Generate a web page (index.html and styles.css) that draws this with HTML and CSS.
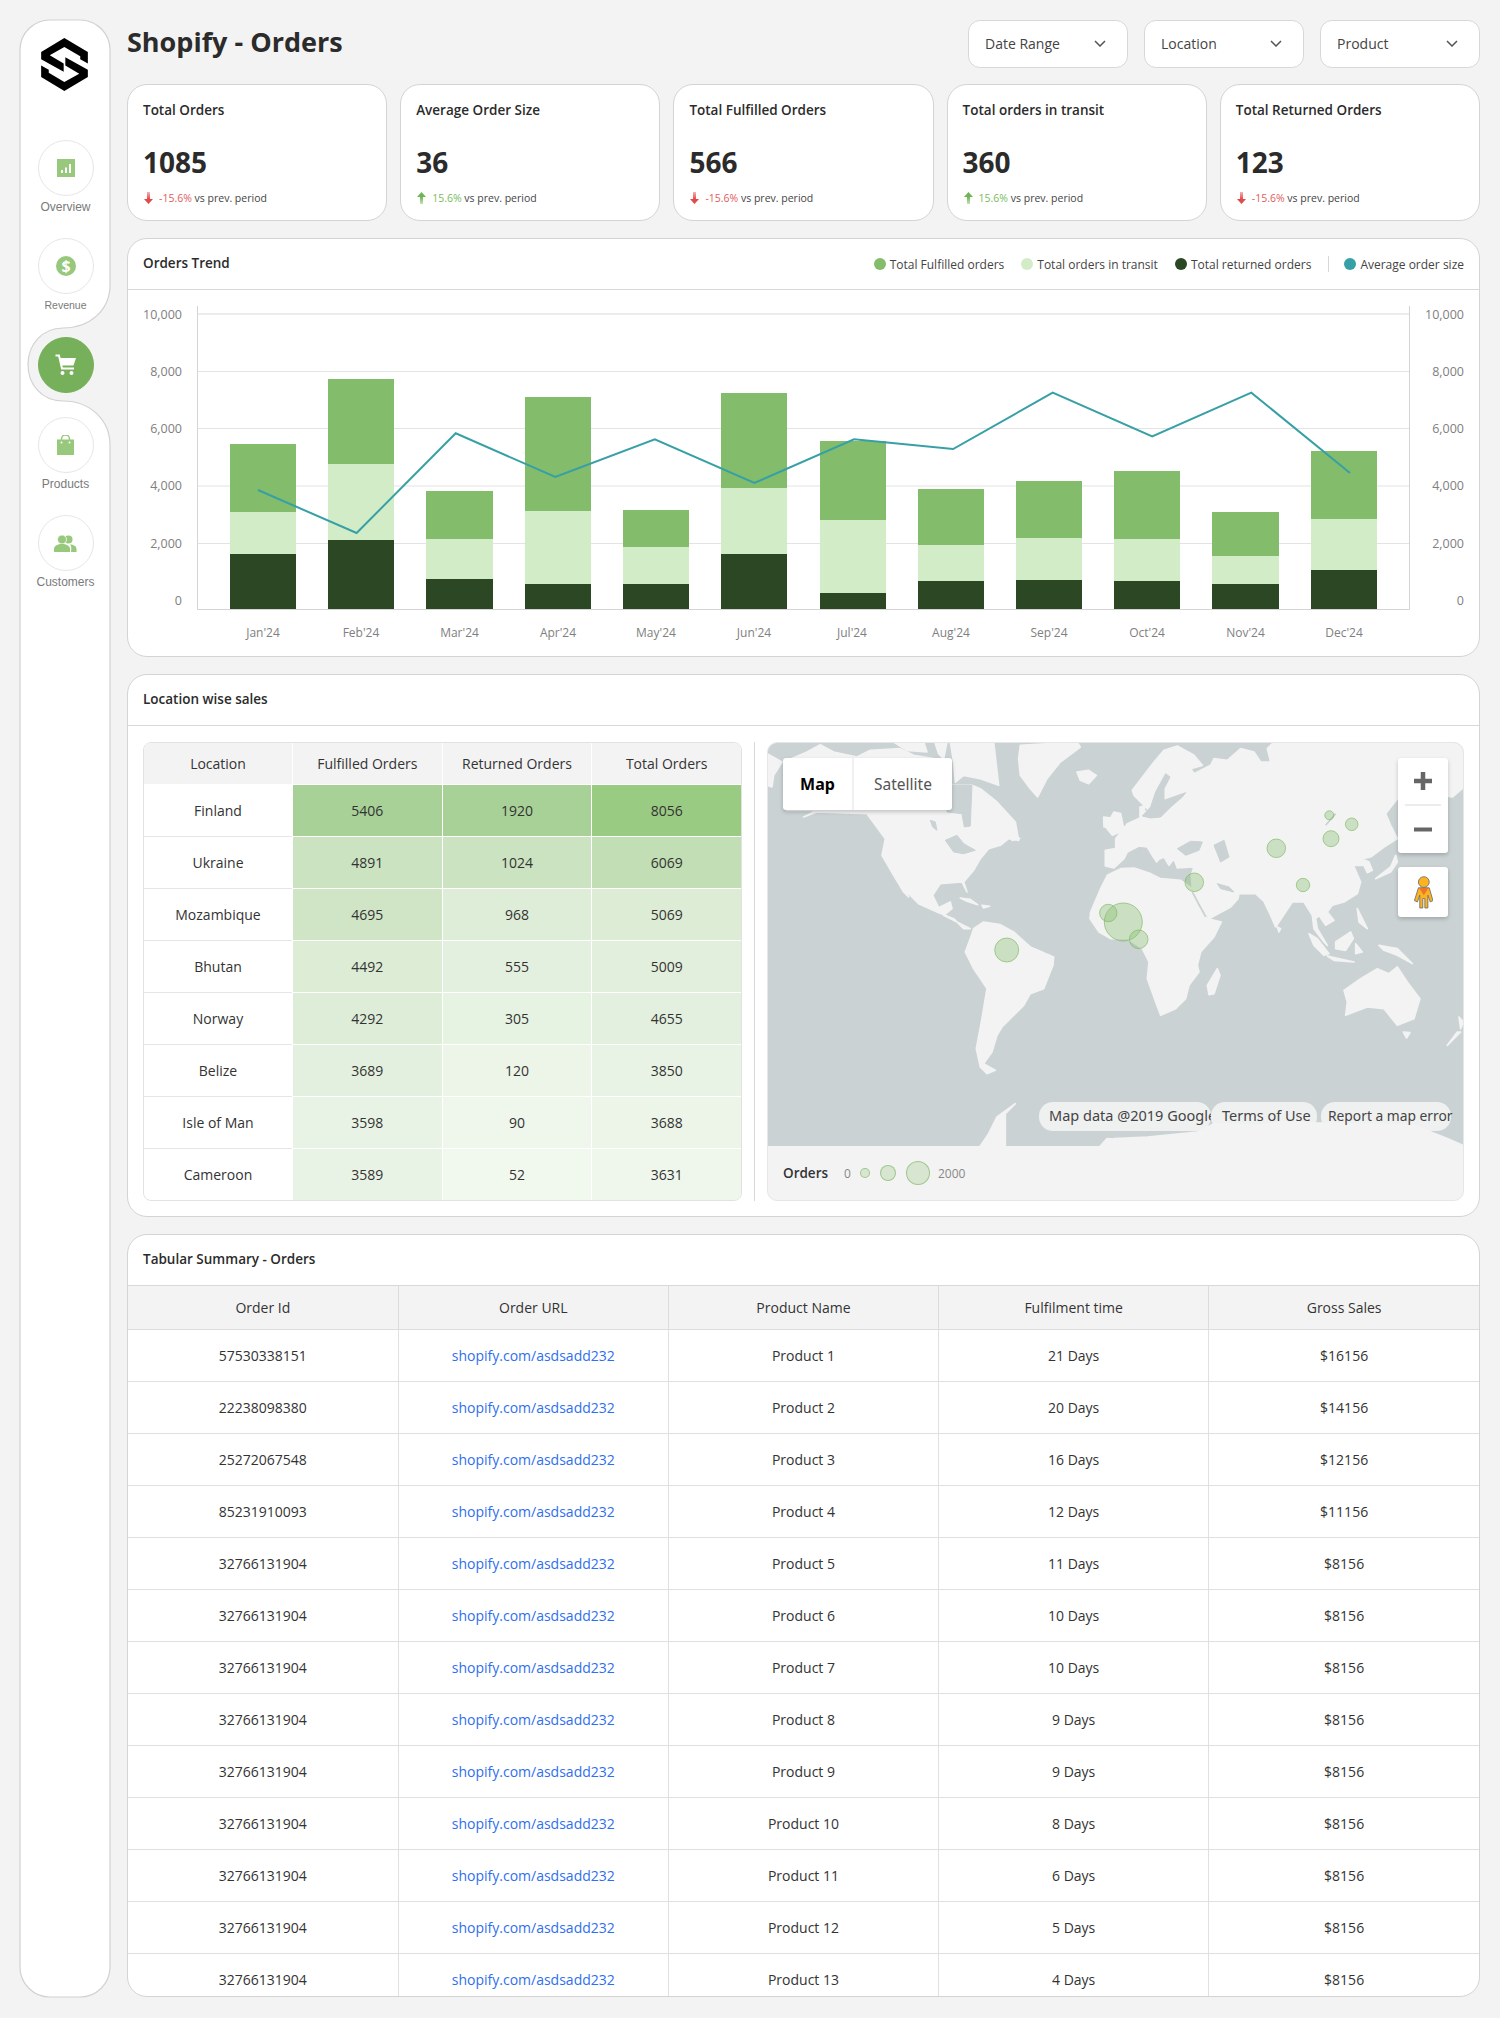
FILE: index.html
```html
<!DOCTYPE html>
<html lang="en">
<head>
    <meta charset="UTF-8" />
    <meta name="viewport" content="width=device-width, initial-scale=1">
    <title>Shopify - Orders</title>
    <link rel="stylesheet" href="styles.css">
</head>
<body>
    <svg class="gradients" width="0" height="0">
        <defs>
            <linearGradient id="fadeRed" x1="0" y1="1" x2="0" y2="0">
                <stop offset="0.4" stop-color="#e4484b"/><stop offset="1" stop-color="#f3b5b5"/>
            </linearGradient>
            <linearGradient id="fadeGreen" x1="0" y1="0" x2="0" y2="1">
                <stop offset="0.4" stop-color="#6fb455"/><stop offset="1" stop-color="#c5e2b8"/>
            </linearGradient>
        </defs>
    </svg>

    <aside class="sidebar">
        <svg class="sidebar-shape" width="92" height="1979" viewBox="19 19 92 1979">
            <path d="M50 20H80A30 30 0 0 1 110 50V285C110 310 90 328 63 328C42 328 28 345 28 364.500C28 385 42 401 63 401C90 401 110 420 110 445V1967A30 30 0 0 1 80 1997H50A30 30 0 0 1 20 1967V50A30 30 0 0 1 50 20Z"/>
        </svg>
        <svg class="logo" width="47" height="53" viewBox="122 113 141 160">
            <path d="M192 113L263 155V190L240 177V168L192 140L148 165L190 190V215L122 177V155Z"/>
            <path d="M192 273L122 231V196L145 209V218L192 246L237 221L195 196V171L263 209V231Z"/>
        </svg>
        <nav class="nav">
            <a class="nav-item">
                <span class="nav-icon">
                    <svg width="18" height="18" viewBox="0 0 18 18"><rect width="18" height="18" fill="#98c87b"/><rect x="4" y="11" width="2" height="3" fill="#fff"/><rect x="8" y="8.500" width="2" height="5.500" fill="#fff"/><rect x="12" y="5" width="2" height="9" fill="#fff"/></svg>
                </span>
                <span class="nav-label">Overview</span>
            </a>
            <a class="nav-item">
                <span class="nav-icon">
                    <svg width="20" height="20" viewBox="0 0 20 20"><circle cx="10" cy="10" r="10" fill="#98c87b"/><text x="10" y="15.500" text-anchor="middle" class="dollar">$</text></svg>
                </span>
                <span class="nav-label nav-label-small">Revenue</span>
            </a>
            <a class="nav-item nav-item-active">
                <span class="nav-icon">
                    <svg width="24" height="24" viewBox="0 0 24 24"><path d="M1.500 2.500H5L8 15.500H20" fill="none" stroke="#fff" stroke-width="2"/><path d="M6 5H22L19.500 12.500H7.500Z" fill="#fff"/><circle cx="8.500" cy="20" r="2" fill="#fff"/><circle cx="17.500" cy="20" r="2" fill="#fff"/></svg>
                </span>
            </a>
            <a class="nav-item">
                <span class="nav-icon">
                    <svg width="17" height="20" viewBox="0 0 17 20"><path d="M4.500 6V4a4 4 0 0 1 8 0V6" fill="none" stroke="#98c87b" stroke-width="1.500"/><rect y="4.500" width="17" height="15.500" fill="#98c87b"/><circle cx="4.500" cy="7.500" r="1" fill="#fff"/><circle cx="12.500" cy="7.500" r="1" fill="#fff"/></svg>
                </span>
                <span class="nav-label">Products</span>
            </a>
            <a class="nav-item">
                <span class="nav-icon">
                    <svg width="23" height="17" viewBox="0 0 23 17"><circle cx="14.500" cy="4.500" r="4" fill="#98c87b"/><path d="M17 17H22.500V14C22.500 11 19.500 9.500 16 9.500C17.500 11 17.500 13 17 17Z" fill="#98c87b"/><circle cx="8" cy="4.500" r="4.500" fill="#98c87b" stroke="#fff" stroke-width="0.800"/><path d="M0 17V14C0 10.500 4 9 8 9C12 9 16 10.500 16 14V17Z" fill="#98c87b"/></svg>
                </span>
                <span class="nav-label">Customers</span>
            </a>
        </nav>
    </aside>

    <main class="main">
        <header class="topbar">
            <h1>Shopify - Orders</h1>
            <div class="filters">
                <div class="filter">Date Range<svg width="12" height="7" viewBox="0 0 12 7"><path d="M1 1L6 6L11 1" fill="none" stroke="#555" stroke-width="1.500"/></svg></div>
                <div class="filter">Location<svg width="12" height="7" viewBox="0 0 12 7"><path d="M1 1L6 6L11 1" fill="none" stroke="#555" stroke-width="1.500"/></svg></div>
                <div class="filter">Product<svg width="12" height="7" viewBox="0 0 12 7"><path d="M1 1L6 6L11 1" fill="none" stroke="#555" stroke-width="1.500"/></svg></div>
            </div>
        </header>

        <section class="kpis">
            <div class="kpi">
                <h3>Total Orders</h3>
                <div class="kpi-value">1085</div>
                <div class="kpi-delta"><svg width="9" height="12" viewBox="0 0 9 12"><path d="M3 0H6V7H9L4.500 12L0 7H3Z" fill="url(#fadeRed)"/></svg><span class="down">-15.6%</span> vs prev. period</div>
            </div>
            <div class="kpi">
                <h3>Average Order Size</h3>
                <div class="kpi-value">36</div>
                <div class="kpi-delta"><svg width="9" height="12" viewBox="0 0 9 12"><path d="M3 12H6V5H9L4.500 0L0 5H3Z" fill="url(#fadeGreen)"/></svg><span class="up">15.6%</span> vs prev. period</div>
            </div>
            <div class="kpi">
                <h3>Total Fulfilled Orders</h3>
                <div class="kpi-value">566</div>
                <div class="kpi-delta"><svg width="9" height="12" viewBox="0 0 9 12"><path d="M3 0H6V7H9L4.500 12L0 7H3Z" fill="url(#fadeRed)"/></svg><span class="down">-15.6%</span> vs prev. period</div>
            </div>
            <div class="kpi">
                <h3>Total orders in transit</h3>
                <div class="kpi-value">360</div>
                <div class="kpi-delta"><svg width="9" height="12" viewBox="0 0 9 12"><path d="M3 12H6V5H9L4.500 0L0 5H3Z" fill="url(#fadeGreen)"/></svg><span class="up">15.6%</span> vs prev. period</div>
            </div>
            <div class="kpi">
                <h3>Total Returned Orders</h3>
                <div class="kpi-value">123</div>
                <div class="kpi-delta"><svg width="9" height="12" viewBox="0 0 9 12"><path d="M3 0H6V7H9L4.500 12L0 7H3Z" fill="url(#fadeRed)"/></svg><span class="down">-15.6%</span> vs prev. period</div>
            </div>
        </section>

        <section class="panel panel-trend">
            <div class="panel-head">
                <h2>Orders Trend</h2>
                <div class="legend">
                    <span class="legend-item"><i class="dot dot-fulfilled"></i>Total Fulfilled orders</span>
                    <span class="legend-item"><i class="dot dot-transit"></i>Total orders in transit</span>
                    <span class="legend-item"><i class="dot dot-returned"></i>Total returned orders</span>
                    <span class="legend-sep"></span>
                    <span class="legend-item"><i class="dot dot-average"></i>Average order size</span>
                </div>
            </div>
            <svg class="chart" width="1351" height="367" viewBox="128 290 1351 367">
                <g class="grid">
                    <line class="grid-top" x1="197" x2="1409" y1="314" y2="314"/>
                    <line x1="197" x2="1409" y1="371.500" y2="371.500"/>
                    <line x1="197" x2="1409" y1="428.500" y2="428.500"/>
                    <line x1="197" x2="1409" y1="486" y2="486"/>
                    <line x1="197" x2="1409" y1="543.500" y2="543.500"/>
                </g>
                <g class="axis">
                    <path d="M197.500 306V609.500H1409.500V306"/>
                </g>
                <g class="bar-fulfilled">
                    <rect x="230" y="444" width="66" height="68"/>
                    <rect x="328" y="379" width="66" height="85"/>
                    <rect x="426" y="491" width="67" height="48"/>
                    <rect x="525" y="397" width="66" height="114"/>
                    <rect x="623" y="510" width="66" height="37"/>
                    <rect x="721" y="393" width="66" height="95"/>
                    <rect x="820" y="441" width="66" height="79"/>
                    <rect x="918" y="489" width="66" height="56"/>
                    <rect x="1016" y="481" width="66" height="57"/>
                    <rect x="1114" y="471" width="66" height="68"/>
                    <rect x="1212" y="512" width="67" height="44"/>
                    <rect x="1311" y="451" width="66" height="68"/>
                </g>
                <g class="bar-transit">
                    <rect x="230" y="512" width="66" height="42"/>
                    <rect x="328" y="464" width="66" height="76"/>
                    <rect x="426" y="539" width="67" height="40"/>
                    <rect x="525" y="511" width="66" height="73"/>
                    <rect x="623" y="547" width="66" height="37"/>
                    <rect x="721" y="488" width="66" height="66"/>
                    <rect x="820" y="520" width="66" height="73"/>
                    <rect x="918" y="545" width="66" height="36"/>
                    <rect x="1016" y="538" width="66" height="42"/>
                    <rect x="1114" y="539" width="66" height="42"/>
                    <rect x="1212" y="556" width="67" height="28"/>
                    <rect x="1311" y="519" width="66" height="51"/>
                </g>
                <g class="bar-returned">
                    <rect x="230" y="554" width="66" height="55"/>
                    <rect x="328" y="540" width="66" height="69"/>
                    <rect x="426" y="579" width="67" height="30"/>
                    <rect x="525" y="584" width="66" height="25"/>
                    <rect x="623" y="584" width="66" height="25"/>
                    <rect x="721" y="554" width="66" height="55"/>
                    <rect x="820" y="593" width="66" height="16"/>
                    <rect x="918" y="581" width="66" height="28"/>
                    <rect x="1016" y="580" width="66" height="29"/>
                    <rect x="1114" y="581" width="66" height="28"/>
                    <rect x="1212" y="584" width="67" height="25"/>
                    <rect x="1311" y="570" width="66" height="39"/>
                </g>
                <polyline class="trend-line" points="258,490 356.600,533 455.700,433.300 555.300,477 654.800,439.300 754.400,483 854,439.300 953.100,449 1052.700,392.700 1152.200,436.300 1251.300,392.700 1350,473"/>
                <g class="tick-left">
                    <text x="182" y="318.500">10,000</text>
                    <text x="182" y="375.500">8,000</text>
                    <text x="182" y="432.500">6,000</text>
                    <text x="182" y="490">4,000</text>
                    <text x="182" y="547.500">2,000</text>
                    <text x="182" y="605">0</text>
                </g>
                <g class="tick-right">
                    <text x="1464" y="318.500">10,000</text>
                    <text x="1464" y="375.500">8,000</text>
                    <text x="1464" y="432.500">6,000</text>
                    <text x="1464" y="490">4,000</text>
                    <text x="1464" y="547.500">2,000</text>
                    <text x="1464" y="605">0</text>
                </g>
                <g class="tick-month">
                    <text x="263" y="637">Jan'24</text>
                    <text x="361" y="637">Feb'24</text>
                    <text x="459.500" y="637">Mar'24</text>
                    <text x="558" y="637">Apr'24</text>
                    <text x="656" y="637">May'24</text>
                    <text x="754" y="637">Jun'24</text>
                    <text x="852" y="637">Jul'24</text>
                    <text x="951" y="637">Aug'24</text>
                    <text x="1049" y="637">Sep'24</text>
                    <text x="1147" y="637">Oct'24</text>
                    <text x="1245.500" y="637">Nov'24</text>
                    <text x="1344" y="637">Dec'24</text>
                </g>
            </svg>
        </section>

        <section class="panel panel-location">
            <div class="panel-head"><h2>Location wise sales</h2></div>
            <div class="location-body">
                <table class="heat-table">
                    <thead>
                        <tr><th>Location</th><th>Fulfilled Orders</th><th>Returned Orders</th><th>Total Orders</th></tr>
                    </thead>
                    <tbody>
                        <tr><td>Finland</td><td class="h1">5406</td><td class="h1">1920</td><td class="h0">8056</td></tr>
                        <tr><td>Ukraine</td><td class="h2">4891</td><td class="h2">1024</td><td class="h3">6069</td></tr>
                        <tr><td>Mozambique</td><td class="h4">4695</td><td class="h6">968</td><td class="h5">5069</td></tr>
                        <tr><td>Bhutan</td><td class="h5">4492</td><td class="h8">555</td><td class="h7">5009</td></tr>
                        <tr><td>Norway</td><td class="h6">4292</td><td class="h9">305</td><td class="h8">4655</td></tr>
                        <tr><td>Belize</td><td class="h8">3689</td><td class="h11">120</td><td class="h10">3850</td></tr>
                        <tr><td>Isle of Man</td><td class="h10">3598</td><td class="h12">90</td><td class="h11">3688</td></tr>
                        <tr><td>Cameroon</td><td class="h10">3589</td><td class="h13">52</td><td class="h12">3631</td></tr>
                    </tbody>
                </table>
                <div class="location-sep"></div>
                <div class="map-box">
                    <div class="map">
                        <svg class="map-art" width="697" height="404" viewBox="1 1 697 404">
                            <!-- americas, traced at 3x -->
                            <g class="land" transform="scale(0.3333)">
                                <path d="M120 30L160 8L200 30L270 45L310 25L400 20L440 40L500 50L545 130L615 130L640 140L690 180L745 240L755 295L725 290L700 310L665 320L640 350L620 385L590 420L600 450L585 420L520 425L497 460L515 497L550 480L555 500L530 520L580 545L610 560L590 560L560 530L510 510L455 485L420 450L395 410L425 465L410 450L380 400L345 340L355 290L300 215L150 210L110 225L150 205L60 205L50 60Z"/>
                                <path d="M380 0L470 0L480 30L420 25ZM505 5L540 0L530 50L515 35ZM550 0L680 0L695 130L640 110L590 100L565 120L560 60Z"/>
                                <path d="M760 10L930 0L940 15L880 60L840 110L812 165L790 140L760 100L755 50Z"/>
                                <path d="M930 90L965 85L988 100L965 125L940 115Z"/>
                                <path d="M0 35L45 60L20 100L15 135L0 130Z"/>
                                <path d="M580 468L610 472L632 488L600 478ZM645 490L668 493L650 498ZM730 265L758 290L735 295Z"/>
                                <path d="M620 560L650 540L700 548L740 570L790 615L860 645L858 670L830 740L790 755L770 790L735 825L705 855L690 880L675 930L650 965L685 985L660 995L640 975L628 920L645 830L660 740L620 680L595 630L610 590Z"/>
                                <path d="M640 1212L665 1175L690 1125L745 1085L715 1115L715 1212Z"/>
                                <path d="M1000 1212L1020 1190L1050 1192L1060 1212Z"/>
                            </g>
                            <!-- africa, eurasia, oceania -->
                            <g class="land" transform="translate(347 0) scale(0.3333)">
                                <path d="M-70 510L-40 440L-20 400L20 380L60 378L110 395L140 410L200 415L235 440L250 490L280 530L322 540L300 585L260 630L250 670L255 690L225 730L215 770L185 800L140 820L125 780L100 710L105 660L85 620L40 590L-10 590L-45 570L-72 530Z"/>
                                <path d="M-26 325L5 320L5 290L40 245L78 228L78 195L90 192L92 210L105 205L60 160L55 145L120 60L150 25L190 12L240 40L265 70L230 80L240 95L290 70L300 50L340 55L380 20L420 30L440 60L470 60L460 20L480 0L1050 0L1050 135L1015 165L985 160L850 170L815 215L830 250L850 290L810 315L770 345L745 350L765 360L775 385L760 392L750 370L718 370L725 385L740 420L730 455L690 480L655 490L640 510L660 535L635 550L615 520L605 530L610 560L640 610L630 600L600 560L595 520L570 480L535 480L495 540L485 555L470 520L450 478L425 455L375 455L372 470L350 495L285 530L255 480L235 440L232 400L240 375L190 378L180 350L165 370L150 345L135 352L128 360L118 345L100 315L75 312L40 330L30 350L0 378L-26 372Z"/>
                                <path d="M0 210L20 215L30 265L-5 280L-25 255ZM-31 225L-8 228L-12 255L-30 255Z"/>
                                <path d="M310 680L318 700L300 755L285 758L280 730Z"/>
                                <path d="M490 555L500 560L495 570Z"/>
                                <path d="M845 340L850 360L830 390L785 410L830 375Z"/>
                                <path d="M585 575L610 590L645 635L630 640L600 610Z"/>
                                <path d="M665 600L710 570L718 590L695 625L665 620Z"/>
                                <path d="M640 642L720 660L660 655Z"/>
                                <path d="M725 605L745 630L725 635Z"/>
                                <path d="M730 500L745 530L760 560L735 540Z"/>
                                <path d="M795 610L850 620L895 665L850 640L810 625Z"/>
                                <path d="M690 745L740 710L790 680L825 695L850 675L880 720L918 770L900 830L850 850L810 800L760 795L695 820L700 780Z"/>
                                <path d="M868 870L888 872L878 888Z"/>
                                <path d="M1040 870L1000 910L1030 870ZM1035 825L1048 840L1040 860Z"/>
                                <path d="M0 1190L100 1185L250 1170L300 1145L440 1150L500 1140L900 1150L1000 1190L1050 1212L0 1212Z"/>
                            </g>
                            <g class="water" transform="translate(347 0) scale(0.3333)">
                                <path d="M190 320L230 298L265 300L255 325L215 340Z"/>
                                <path d="M300 310L330 295L345 345L320 360L310 335Z"/>
                                <path d="M310 425L345 435L360 450L320 440Z"/>
                                <path d="M85 222L110 195L125 150L155 95L168 105L150 140L150 175L215 152L205 165L170 195L140 225L110 228Z"/>
                                <path class="water-line" d="M235 450L275 525"/>
                                <path class="water-line" d="M635 250L665 215"/>
                            </g>
                            <g class="water" transform="scale(0.3333)">
                                <path d="M540 130L615 130L612 200L610 252L592 255L585 215L540 210Z"/>
                                <path d="M535 295L570 280L590 305L625 325L590 335L560 330Z"/>
                                <path d="M490 235L505 240L510 265L497 255Z"/>
                            </g>
                            <g class="bubbles">
                                <circle cx="562.300" cy="73.300" r="4.500"/>
                                <circle cx="584.700" cy="82.300" r="6.300"/>
                                <circle cx="564" cy="96.700" r="8"/>
                                <circle cx="509.300" cy="106.300" r="9.300"/>
                                <circle cx="536" cy="143" r="6.700"/>
                                <circle cx="427.300" cy="140.300" r="9.300"/>
                                <circle cx="356.300" cy="180" r="19"/>
                                <circle cx="341.300" cy="171" r="8.700"/>
                                <circle cx="371.700" cy="197.300" r="9.300"/>
                                <circle cx="239.700" cy="208" r="12"/>
                            </g>
                        </svg>
                        <div class="map-tabs">
                            <span class="map-tab map-tab-active">Map</span>
                            <span class="map-tab">Satellite</span>
                        </div>
                        <div class="map-zoom">
                            <svg width="50" height="95" viewBox="0 0 50 95">
                                <path d="M16 23H34M25 14V32" stroke="#666" stroke-width="4.500" fill="none"/>
                                <path d="M7 47H43" stroke="#e6e6e6" stroke-width="1.500" fill="none"/>
                                <path d="M16 71.500H34" stroke="#666" stroke-width="4" fill="none"/>
                            </svg>
                        </div>
                        <div class="map-pegman">
                            <svg width="19" height="33" viewBox="897 405 56 98">
                                <path d="M910 440H942L953 478L945 482L938 462V500H929V472H923V500H914V462L907 482L898 478Z" fill="#fbb321" stroke="#6b6b6b" stroke-width="2.500"/>
                                <path d="M912 441H940L926 462Z" fill="#e8762d"/>
                                <circle cx="926" cy="423" r="16" fill="#fbb321" stroke="#6b6b6b" stroke-width="2.500"/>
                            </svg>
                        </div>
                        <div class="map-notes">
                            <span class="map-note note-data">Map data @2019 Google</span>
                            <span class="map-note note-terms">Terms of Use</span>
                            <span class="map-note note-report">Report a map error</span>
                        </div>
                    </div>
                    <div class="map-legend">
                        <strong>Orders</strong>
                        <span class="scale-num scale-zero">0</span>
                        <i class="scale-dot scale-s"></i>
                        <i class="scale-dot scale-m"></i>
                        <i class="scale-dot scale-l"></i>
                        <span class="scale-num">2000</span>
                    </div>
                </div>
            </div>
        </section>

        <section class="panel panel-summary">
            <div class="panel-head"><h2>Tabular Summary - Orders</h2></div>
            <table class="summary-table">
                <thead>
                    <tr><th>Order Id</th><th>Order URL</th><th>Product Name</th><th>Fulfilment time</th><th>Gross Sales</th></tr>
                </thead>
                <tbody>
                    <tr><td>57530338151</td><td><a>shopify.com/asdsadd232</a></td><td>Product 1</td><td>21 Days</td><td>$16156</td></tr>
                    <tr><td>22238098380</td><td><a>shopify.com/asdsadd232</a></td><td>Product 2</td><td>20 Days</td><td>$14156</td></tr>
                    <tr><td>25272067548</td><td><a>shopify.com/asdsadd232</a></td><td>Product 3</td><td>16 Days</td><td>$12156</td></tr>
                    <tr><td>85231910093</td><td><a>shopify.com/asdsadd232</a></td><td>Product 4</td><td>12 Days</td><td>$11156</td></tr>
                    <tr><td>32766131904</td><td><a>shopify.com/asdsadd232</a></td><td>Product 5</td><td>11 Days</td><td>$8156</td></tr>
                    <tr><td>32766131904</td><td><a>shopify.com/asdsadd232</a></td><td>Product 6</td><td>10 Days</td><td>$8156</td></tr>
                    <tr><td>32766131904</td><td><a>shopify.com/asdsadd232</a></td><td>Product 7</td><td>10 Days</td><td>$8156</td></tr>
                    <tr><td>32766131904</td><td><a>shopify.com/asdsadd232</a></td><td>Product 8</td><td>9 Days</td><td>$8156</td></tr>
                    <tr><td>32766131904</td><td><a>shopify.com/asdsadd232</a></td><td>Product 9</td><td>9 Days</td><td>$8156</td></tr>
                    <tr><td>32766131904</td><td><a>shopify.com/asdsadd232</a></td><td>Product 10</td><td>8 Days</td><td>$8156</td></tr>
                    <tr><td>32766131904</td><td><a>shopify.com/asdsadd232</a></td><td>Product 11</td><td>6 Days</td><td>$8156</td></tr>
                    <tr><td>32766131904</td><td><a>shopify.com/asdsadd232</a></td><td>Product 12</td><td>5 Days</td><td>$8156</td></tr>
                    <tr><td>32766131904</td><td><a>shopify.com/asdsadd232</a></td><td>Product 13</td><td>4 Days</td><td>$8156</td></tr>
                </tbody>
            </table>
        </section>
    </main>
</body>
</html>
```

FILE: styles.css
```css
* { box-sizing: border-box; }
html, body { margin: 0; }
body {
    background: #f3f3f3;
    font-family: 'Open Sans', sans-serif;
    color: #2b2b2b;
    display: flex;
    gap: 17px;
    padding: 20px 20px 21px;
    height: 2018px;
    overflow: hidden;
}
h1, h2, h3 { margin: 0; }
.gradients { position: absolute; }

/* Sidebar */
.sidebar {
    position: relative;
    width: 90px;
    flex: none;
    display: flex;
    flex-direction: column;
    align-items: center;
    padding: 18px 0 0 1px;
}
.sidebar-shape {
    position: absolute;
    top: -1px;
    left: -1px;
}
.sidebar-shape path {
    fill: #fff;
    stroke: #d2d2d2;
    stroke-width: 1.2;
}
.logo {
    position: relative;
    flex: none;
    margin-right: 3px;
}
.logo path { fill: #000; }
.nav {
    position: relative;
    display: flex;
    flex-direction: column;
    align-items: center;
    gap: 24px;
    margin-top: 49px;
}
.nav-item {
    display: flex;
    flex-direction: column;
    align-items: center;
    width: 90px;
}
.nav-icon {
    width: 56px;
    height: 56px;
    border-radius: 50%;
    background: #fff;
    border: 1px solid #e6e6e6;
    display: flex;
    align-items: center;
    justify-content: center;
}
.nav-label {
    font-family: 'Liberation Sans', Arial, sans-serif;
    font-size: 12px;
    line-height: 14px;
    margin-top: 4px;
    color: #7a7a7a;
}
.nav-label-small { font-size: 10.5px; }
.nav-item-active { margin-top: 1px; }
.nav-item-active .nav-icon {
    background: #76b05a;
    border-color: #76b05a;
}
.dollar {
    font-family: 'Open Sans', sans-serif;
    font-weight: 700;
    font-size: 16px;
    fill: #fff;
}

/* Top */
.main {
    flex: 1;
    min-width: 0;
    display: flex;
    flex-direction: column;
    gap: 17px;
}
.topbar {
    display: flex;
    justify-content: space-between;
    align-items: flex-start;
    height: 51px;
    margin-bottom: -4px;
}
.topbar h1 {
    font-size: 27px;
    line-height: 44px;
    font-weight: 700;
}
.filters {
    display: flex;
    gap: 16px;
}
.filter {
    width: 160px;
    height: 48px;
    background: #fff;
    border: 1px solid #d8d8d8;
    border-radius: 12px;
    display: flex;
    align-items: center;
    justify-content: space-between;
    padding: 0 21px 2px 16px;
    font-size: 14px;
    color: #444;
}

/* KPI cards */
.kpis {
    display: grid;
    grid-template-columns: repeat(5, 1fr);
    gap: 13px;
}
.kpi {
    height: 137px;
    background: #fff;
    border: 1px solid #d4d4d4;
    border-radius: 20px;
    padding: 15px 15px 0;
}
.kpi h3 {
    font-size: 13.5px;
    line-height: 20px;
    font-weight: 600;
}
.kpi-value {
    font-size: 28px;
    line-height: 38px;
    font-weight: 700;
    margin-top: 23px;
}
.kpi-delta {
    display: flex;
    align-items: center;
    margin-top: 10px;
    font-size: 10.5px;
    line-height: 14px;
    color: #444;
    white-space: pre;
}
.kpi-delta svg { margin: 0 6px 0 1px; }
.down { color: #e25c5c; }
.up { color: #7abb5e; }

/* Panels */
.panel {
    background: #fff;
    border: 1px solid #d4d4d4;
    border-radius: 20px;
    overflow: hidden;
}
.panel-head {
    height: 51px;
    display: flex;
    align-items: center;
    justify-content: space-between;
    padding: 0 15px;
    border-bottom: 1px solid #d8d8d8;
}
.panel-head h2 {
    font-size: 13.5px;
    font-weight: 600;
    margin-top: -3px;
}
.panel-trend { height: 419px; }
.panel-location { height: 543px; }
.panel-summary { height: 763px; }

.legend {
    display: flex;
    align-items: center;
    gap: 17px;
    font-size: 12px;
    color: #444;
}
.legend-item {
    display: flex;
    align-items: center;
    gap: 4px;
}
.dot {
    width: 12px;
    height: 12px;
    border-radius: 50%;
}
.dot-fulfilled { background: #83bc6b; }
.dot-transit { background: #d3ecc8; }
.dot-returned { background: #2c4723; }
.dot-average { background: #36a0a6; }
.legend-sep {
    width: 1px;
    height: 16px;
    margin-right: -2px;
    background: #d8d8d8;
}

/* Chart */
.chart { display: block; }
.grid line {
    stroke: #e3e3e3;
    stroke-width: 1;
}
.grid .grid-top {
    stroke: #ececec;
    stroke-width: 2;
}
.axis path {
    fill: none;
    stroke: #d4d4d4;
    stroke-width: 1;
}
.bar-fulfilled { fill: #83bc6b; }
.bar-transit { fill: #d3ecc8; }
.bar-returned { fill: #2c4723; }
.trend-line {
    fill: none;
    stroke: #36a0a6;
    stroke-width: 2;
}
.tick-left, .tick-right, .tick-month {
    font-size: 12.5px;
    fill: #808080;
}
.tick-left, .tick-right { text-anchor: end; }
.tick-month { text-anchor: middle; font-size: 12px; }

/* Location */
.location-body {
    display: flex;
    align-items: flex-start;
    gap: 12px;
    padding: 16px 15px;
    height: 491px;
}
.heat-table {
    width: 599px;
    flex: none;
    table-layout: fixed;
    border-collapse: separate;
    border-spacing: 0;
    border: 1px solid #e2e2e2;
    border-radius: 8px;
    overflow: hidden;
    font-size: 14px;
    text-align: center;
    color: #333;
}
.heat-table th {
    height: 42px;
    background: #f3f3f3;
    font-weight: 400;
    border-left: 1px solid #fff;
    border-bottom: 1px solid #fff;
}
.heat-table th:first-child { width: 148px; }
.heat-table th:first-child, .heat-table td:first-child { border-left: 0; }
.heat-table td {
    height: 52px;
    border-left: 1px solid #fff;
    border-bottom: 1px solid #fff;
    padding: 0;
}
.heat-table tr td:first-child { border-bottom-color: #e6e6e6; }
.heat-table tbody tr:last-child td { border-bottom: 0; height: 51px; }
.h0 { background: #9acb83; }
.h1 { background: #a8d198; }
.h2 { background: #cbe3c1; }
.h3 { background: #c1deb4; }
.h4 { background: #cfe5c6; }
.h5 { background: #dcecd5; }
.h6 { background: #deedd8; }
.h7 { background: #e2efdc; }
.h8 { background: #e4f0df; }
.h9 { background: #e6f2e2; }
.h10 { background: #e9f3e5; }
.h11 { background: #ecf5e8; }
.h12 { background: #eff6ec; }
.h13 { background: #f1f8ee; }
.location-sep {
    width: 1px;
    height: 459px;
    flex: none;
    background: #d8d8d8;
}
.map-box {
    flex: 1;
    min-width: 0;
    border-radius: 10px;
    overflow: hidden;
    border: 1px solid #e6e6e6;
    background: #f3f3f3;
}
.map {
    position: relative;
    height: 403px;
    background: #cad2d4;
    overflow: hidden;
}
.map-art { display: block; }
.land {
    fill: #f2f3f2;
    stroke: #f2f3f2;
    stroke-width: 5;
    stroke-linejoin: round;
}
.water {
    fill: #cad2d4;
    stroke: #cad2d4;
    stroke-width: 3;
    stroke-linejoin: round;
}
.water .water-line {
    fill: none;
    stroke-width: 5;
}
.bubbles circle {
    fill: rgba(131, 188, 107, 0.35);
    stroke: rgba(120, 180, 95, 0.6);
    stroke-width: 1;
}
.map-tabs {
    position: absolute;
    top: 15px;
    left: 15px;
    display: flex;
    width: 169px;
    height: 52px;
    background: #fff;
    border-radius: 3px;
    box-shadow: 0 2px 4px rgba(0, 0, 0, 0.2);
    font-family: 'Noto Sans', sans-serif;
    font-size: 15.5px;
    color: #555;
}
.map-tab {
    display: flex;
    align-items: center;
    justify-content: center;
    flex: 1;
    border-left: 2px solid #f0f0f0;
}
.map-tab-active {
    flex: none;
    width: 69px;
    border-left: 0;
    font-size: 16px;
    font-weight: 700;
    color: #000;
}
.map-zoom, .map-pegman {
    position: absolute;
    left: 630px;
    width: 50px;
    background: #fff;
    border-radius: 3px;
    box-shadow: 0 2px 4px rgba(0, 0, 0, 0.2);
    display: flex;
    align-items: center;
    justify-content: center;
}
.map-zoom { top: 15px; height: 95px; }
.map-pegman { top: 124px; height: 50px; }
.map-notes {
    position: absolute;
    left: 271px;
    top: 359px;
    display: flex;
    font-size: 14.5px;
    font-family: 'Noto Sans', sans-serif;
    color: #444;
}
.map-note {
    height: 29px;
    line-height: 27px;
    background: rgba(243, 243, 243, 0.9);
    border-radius: 14px;
    white-space: nowrap;
    overflow: hidden;
}
.note-data { width: 172px; padding-left: 10px; }
.note-terms { width: 106px; padding-left: 11px; }
.note-report { width: 130px; padding-left: 7px; margin-left: 4px; overflow: visible; font-size: 13.8px; }
.map-legend {
    display: flex;
    align-items: center;
    height: 54px;
    padding-left: 15px;
    font-size: 12px;
    color: #888;
}
.map-legend strong {
    font-size: 13.5px;
    font-weight: 600;
    color: #333;
    margin-right: 16px;
}
.scale-dot {
    flex: none;
    border-radius: 50%;
    background: rgba(131, 188, 107, 0.25);
    border: 1px solid rgba(120, 180, 95, 0.6);
}
.scale-zero { margin-right: 9px; }
.scale-s { width: 10px; height: 10px; margin-right: 10px; }
.scale-m { width: 16px; height: 16px; margin-right: 10px; }
.scale-l { width: 24px; height: 24px; margin-right: 8px; }

/* Summary table */
.summary-table {
    width: 100%;
    table-layout: fixed;
    border-collapse: collapse;
    font-size: 14px;
    text-align: center;
    color: #333;
}
.summary-table th {
    height: 43px;
    background: #f3f3f3;
    font-weight: 400;
    border-left: 1px solid #dcdcdc;
    border-bottom: 1px solid #dcdcdc;
}
.summary-table td {
    height: 52px;
    padding: 0;
    border-left: 1px solid #e0e0e0;
    border-bottom: 1px solid #e0e0e0;
}
.summary-table th:first-child, .summary-table td:first-child { border-left: 0; }
.summary-table a { color: #2f6fed; }
```
